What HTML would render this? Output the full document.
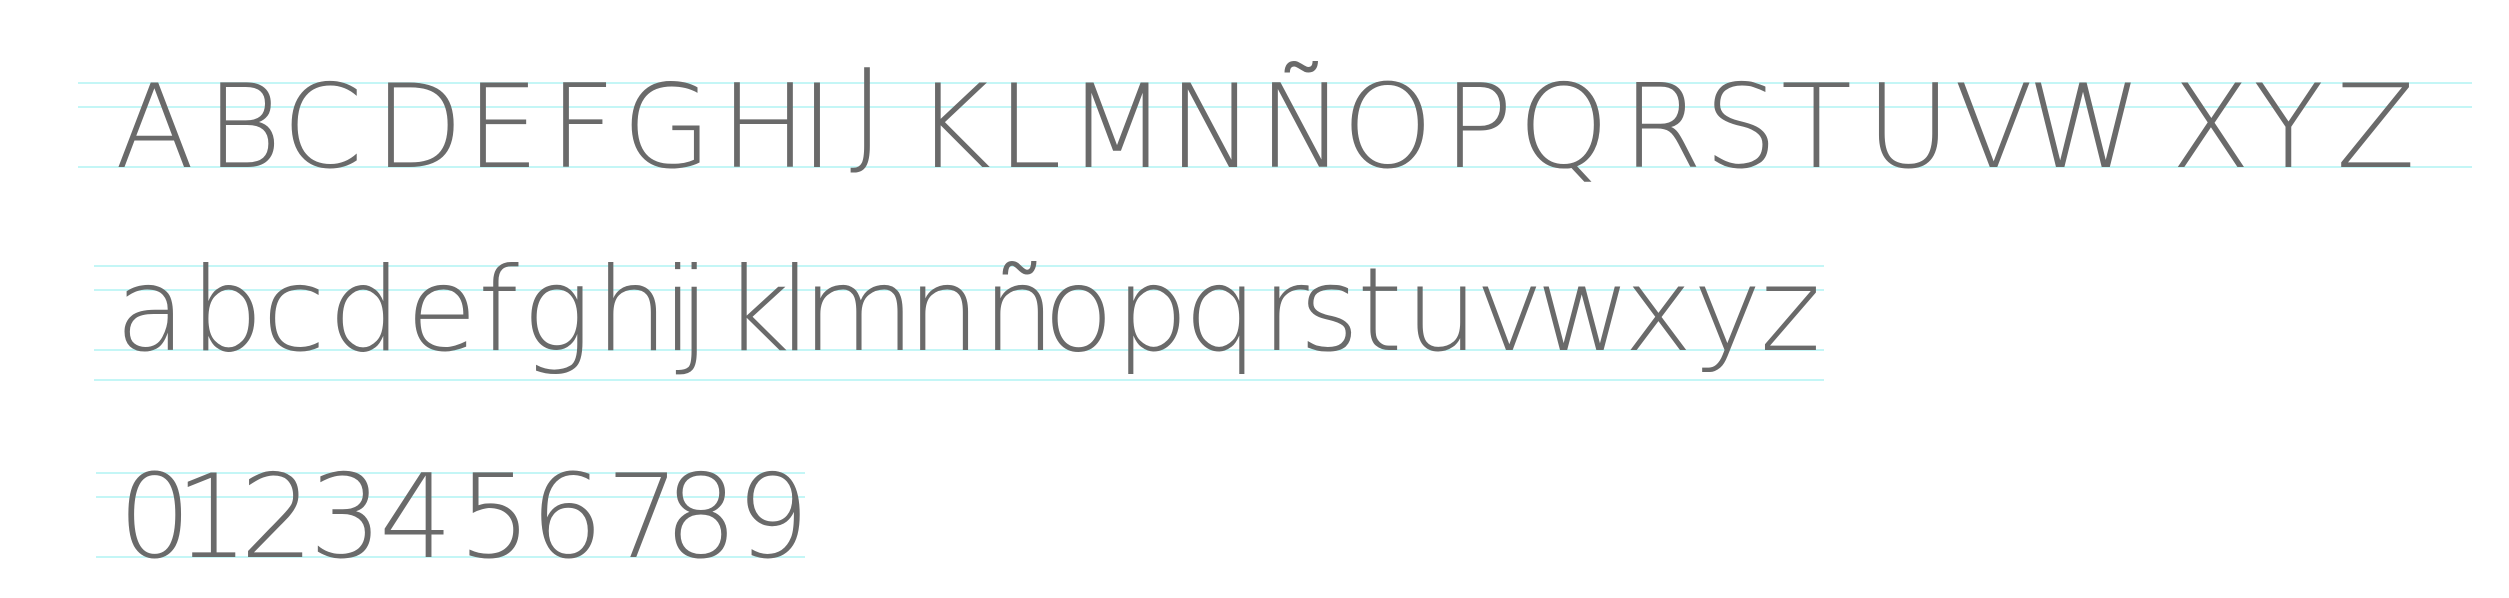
<!DOCTYPE html>
<html><head><meta charset="utf-8"><style>
html,body{margin:0;padding:0;background:#fff;width:2509px;height:598px;overflow:hidden}
svg text{font-family:"DejaVu Sans","Liberation Sans",sans-serif;font-weight:200;font-size:116px;fill:#6a6a6a}
</style></head><body>
<svg width="2509" height="598" xmlns="http://www.w3.org/2000/svg">
<g stroke="#c4f6f6" stroke-width="2">
<line x1="78" y1="83" x2="2472" y2="83"/><line x1="78" y1="107" x2="2472" y2="107"/><line x1="78" y1="167" x2="2472" y2="167"/>
<line x1="94" y1="266" x2="1824" y2="266"/><line x1="94" y1="290" x2="1824" y2="290"/><line x1="94" y1="350" x2="1824" y2="350"/><line x1="94" y1="380" x2="1824" y2="380"/>
<line x1="96" y1="473" x2="805" y2="473"/><line x1="96" y1="497" x2="805" y2="497"/><line x1="96" y1="557" x2="805" y2="557"/>
</g>
<g>
<text x="115" y="167">A</text><text x="206" y="167">B</text><text x="282" y="167">C</text><text x="374" y="167">D</text><text x="466" y="167">E</text><text x="549" y="167">F</text><text x="622" y="167">G</text><text x="720" y="167">H</text><text x="800" y="167">I</text><text x="850" y="152">J</text><text x="915" y="167">K</text><text x="997" y="167">L</text><text x="1067" y="167">M</text><text x="1168" y="167">N</text><text x="1258" y="167">Ñ</text><text x="1342" y="167">O</text><text x="1443" y="167">P</text><text x="1518" y="167">Q</text><text x="1622" y="167">R</text><text x="1704" y="167">S</text><text x="1781" y="167">T</text><text x="1866" y="167">U</text><text x="1954" y="167">V</text><text x="2027" y="167">W</text><text x="2171" y="167">X</text><text x="2253" y="167">Y</text><text x="2336" y="167">Z</text>
</g>
<g>
<text x="115" y="350">a</text><text x="190" y="350">b</text><text x="262" y="350">c</text><text x="328" y="350">d</text><text x="406" y="350">e</text><text x="478" y="350">f</text><text x="522" y="350">g</text><text x="595" y="350">h</text><text x="662" y="350">i</text><text x="678" y="350">j</text><text x="723" y="350">k</text><text x="779" y="350">l</text><text x="802" y="350">m</text><text x="907" y="350">n</text><text x="982" y="350">ñ</text><text x="1043" y="350">o</text><text x="1115" y="350">p</text><text x="1184" y="350">q</text><text x="1261" y="350">r</text><text x="1299" y="350">s</text><text x="1357" y="350">t</text><text x="1405" y="350">u</text><text x="1475" y="350">v</text><text x="1536" y="350">w</text><text x="1624" y="350">x</text><text x="1693" y="350">y</text><text x="1760" y="350">z</text>
</g>
<g>
<text x="118" y="557">0</text><text x="175" y="557">1</text><text x="240" y="557">2</text><text x="309" y="557">3</text><text x="379" y="557">4</text><text x="458" y="557">5</text><text x="530" y="557">6</text><text x="606" y="557">7</text><text x="664" y="557">8</text><text x="736" y="557">9</text>
</g>
</svg>
</body></html>
